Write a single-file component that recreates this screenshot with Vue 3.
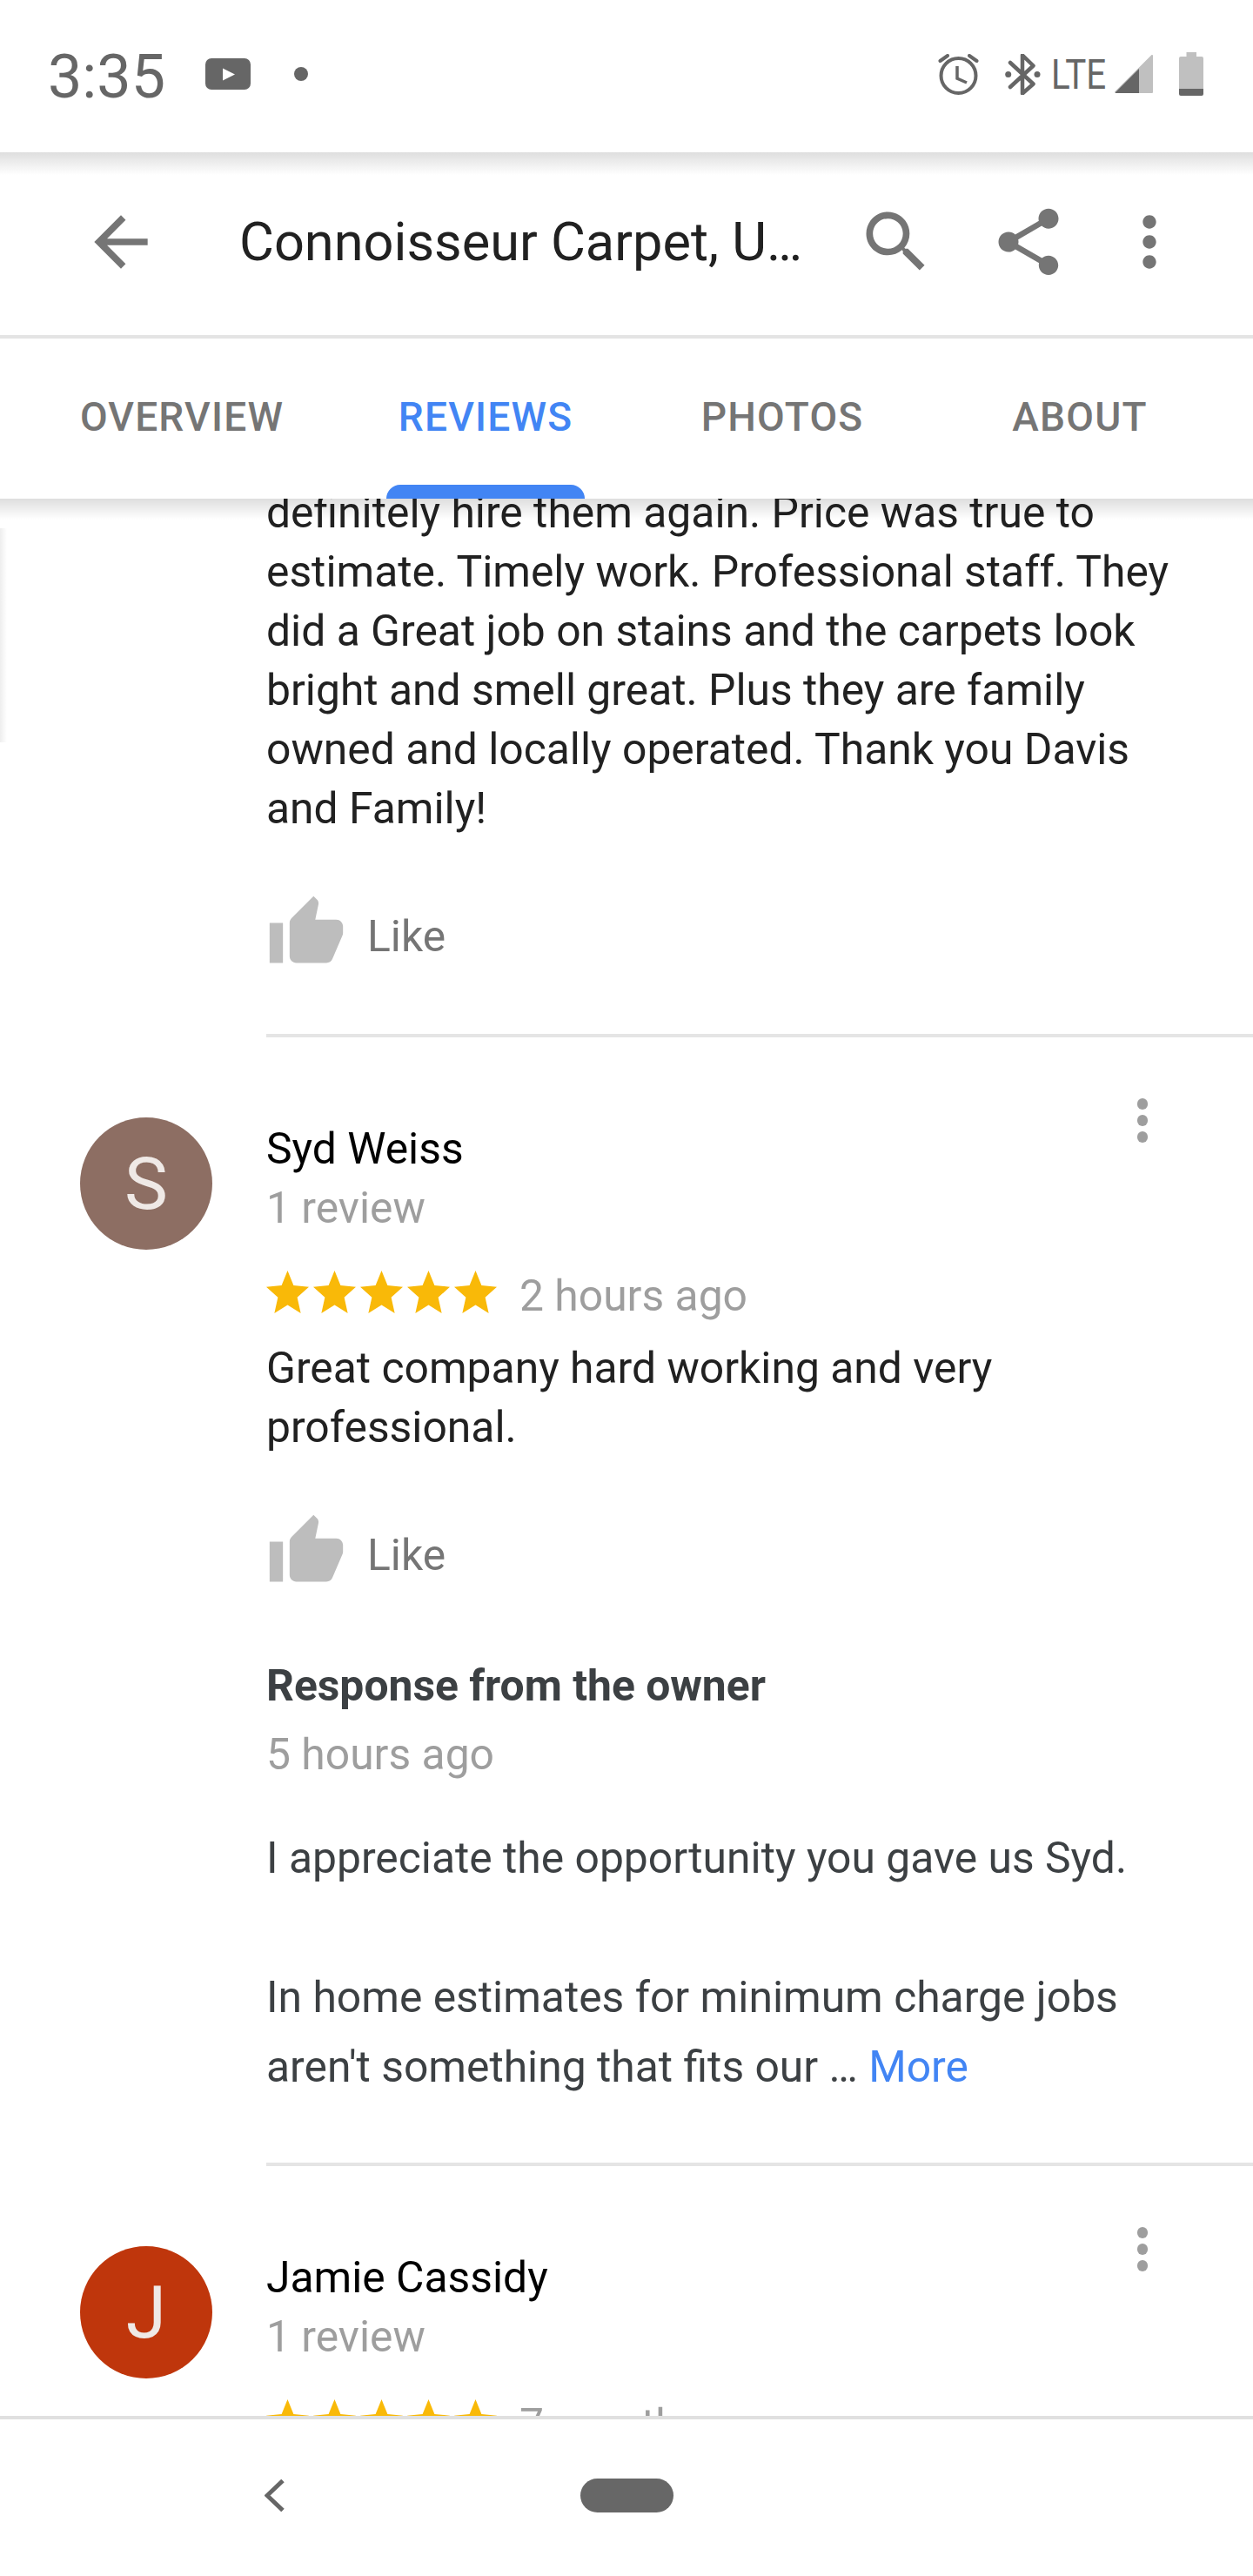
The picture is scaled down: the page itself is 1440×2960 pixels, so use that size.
<script setup>
import { ref } from 'vue';

const tabs = ['OVERVIEW', 'REVIEWS', 'PHOTOS', 'ABOUT'];
const activeTab = ref('REVIEWS');

const icons = {
  back: 'M20 11H7.83l5.59-5.59L12 4l-8 8 8 8 1.41-1.41L7.83 13H20v-2z',
  search: 'M15.5 14h-.79l-.28-.27C15.41 12.59 16 11.11 16 9.5 16 5.91 13.09 3 9.5 3S3 5.91 3 9.5 5.91 16 9.5 16c1.61 0 3.09-.59 4.23-1.57l.27.28v.79l5 4.99L20.49 19l-4.99-5zm-6 0C7.01 14 5 11.99 5 9.5S7.01 5 9.5 5 14 7.01 14 9.5 11.99 14 9.5 14z',
  share: 'M18 16.08c-.76 0-1.44.3-1.96.77L8.91 12.7c.05-.23.09-.46.09-.7s-.04-.47-.09-.7l7.05-4.11c.54.5 1.25.81 2.04.81 1.66 0 3-1.34 3-3s-1.34-3-3-3-3 1.34-3 3c0 .24.04.47.09.7L8.04 9.81C7.5 9.31 6.79 9 6 9c-1.66 0-3 1.34-3 3s1.34 3 3 3c.79 0 1.5-.31 2.04-.81l7.12 4.16c-.05.21-.08.43-.08.65 0 1.61 1.31 2.92 2.92 2.92 1.61 0 2.92-1.31 2.92-2.92s-1.31-2.92-2.92-2.92z',
  more: 'M12 8c1.1 0 2-.9 2-2s-.9-2-2-2-2 .9-2 2 .9 2 2 2zm0 2c-1.1 0-2 .9-2 2s.9 2 2 2 2-.9 2-2-.9-2-2-2zm0 6c-1.1 0-2 .9-2 2s.9 2 2 2 2-.9 2-2-.9-2-2-2z',
  thumb: 'M1 21h4V9H1v12zm22-11c0-1.1-.9-2-2-2h-6.31l.95-4.57.03-.32c0-.41-.17-.79-.44-1.06L14.17 1 7.59 7.59C7.22 7.95 7 8.45 7 9v10c0 1.1.9 2 2 2h9c.83 0 1.54-.5 1.84-1.22l3.02-7.05c.09-.23.14-.47.14-.73v-2z',
  star: 'M12 17.27L18.18 21l-1.64-7.03L22 9.24l-7.19-.61L12 2 9.19 8.63 2 9.24l5.46 4.73L5.82 21z'
};

const reviews = [
  {
    name: 'Syd Weiss',
    meta: '1 review',
    initial: 'S',
    color: '#8d6e63',
    time: '2 hours ago',
    text: 'Great company hard working and very professional.',
    response: {
      time: '5 hours ago',
      lines: ['I appreciate the opportunity you gave us Syd.', '', 'In home estimates for minimum charge jobs', "aren't something that fits our … "]
    }
  },
  {
    name: 'Jamie Cassidy',
    meta: '1 review',
    initial: 'J',
    color: '#bf360c',
    time: '7 months ago',
    text: ''
  }
];
</script>

<template>
  <div class="phone">
    <div class="status-bar">
      <span class="clock">3:35</span>
      <svg class="yt" width="52" height="36" viewBox="0 0 52 36">
        <rect width="52" height="36" rx="7" fill="#666" />
        <path d="M20 11.5 L34 18.5 L20 25.5z" fill="#fff" />
      </svg>
      <span class="notif-dot"></span>
      <div class="status-right">
        <svg class="alarm" width="47" height="47" viewBox="0 0 47 47" fill="none" stroke="#666">
          <circle cx="23.5" cy="25" r="20" stroke-width="4" />
          <path d="M2.5 8 L11 2 M36 2 L44.5 8" stroke-width="4" stroke-linecap="round" />
          <path d="M22 14 V28 L33 33" stroke-width="3.5" />
        </svg>
        <svg class="bt" width="41" height="47" viewBox="0 0 41 47" fill="none" stroke="#666">
          <path d="M6 10 L32.5 34.5 L20 45.5 V1.5 L32.5 13.5 L6 38" stroke-width="4.5" stroke-linejoin="round" stroke-linecap="round" />
          <circle cx="3.7" cy="23.5" r="3.5" fill="#666" stroke="none" />
          <circle cx="37" cy="23.5" r="3.5" fill="#666" stroke="none" />
        </svg>
        <span class="lte">LTE</span>
        <svg class="signal" width="44" height="44" viewBox="0 0 44 44">
          <path d="M1 43 L43 1 V43z" fill="#c0c0c0" stroke="#c0c0c0" stroke-width="2" stroke-linejoin="round" />
          <path d="M1 43 L28 16 V44 H1z" fill="#666" stroke="#666" stroke-width="0" />
        </svg>
        <svg class="battery" width="28" height="50" viewBox="0 0 28 50">
          <path d="M8.5 0 H20 V5 H26 a2 2 0 0 1 2 2 V42 H0 V7 a2 2 0 0 1 2 -2 H8.5z" fill="#c0c0c0" />
          <path d="M0 42 H28 V48 a2 2 0 0 1 -2 2 H2 a2 2 0 0 1 -2 -2z" fill="#666" />
        </svg>
      </div>
    </div>

    <div class="toolbar">
      <svg class="tool-icon back" viewBox="0 0 24 24"><path :d="icons.back" /></svg>
      <div class="title">Connoisseur Carpet, U…</div>
      <svg class="tool-icon search" viewBox="0 0 24 24"><path :d="icons.search" /></svg>
      <svg class="tool-icon share" viewBox="0 0 24 24"><path :d="icons.share" /></svg>
      <svg class="tool-icon more" viewBox="0 0 24 24"><path :d="icons.more" /></svg>
    </div>

    <div class="tabs">
      <div v-for="tab in tabs" :key="tab" class="tab" :class="{ active: tab === activeTab }">{{ tab }}</div>
    </div>

    <div class="content">
      <div class="drawer-edge"></div>
      <div class="partial">
        <p class="body-text">definitely hire them again. Price was true to estimate. Timely work. Professional staff. They did a Great job on stains and the carpets look bright and smell great. Plus they are family owned and locally operated. Thank you Davis and Family!</p>
        <div class="like">
          <svg class="thumb" viewBox="0 0 24 24"><path :d="icons.thumb" /></svg>
          <span>Like</span>
        </div>
      </div>

      <div v-for="r in reviews" :key="r.name" class="review">
        <div class="avatar" :style="{ background: r.color }">{{ r.initial }}</div>
        <div class="review-main">
          <div class="review-head">
            <div>
              <div class="name">{{ r.name }}</div>
              <div class="meta">{{ r.meta }}</div>
            </div>
            <div class="dots"><i></i><i></i><i></i></div>
          </div>
          <div class="rating">
            <svg v-for="n in 5" :key="n" class="star" viewBox="2 2 20 19" preserveAspectRatio="none"><path :d="icons.star" /></svg>
            <span class="time">{{ r.time }}</span>
          </div>
          <template v-if="r.text">
            <p class="body-text">{{ r.text }}</p>
            <div class="like">
              <svg class="thumb" viewBox="0 0 24 24"><path :d="icons.thumb" /></svg>
              <span>Like</span>
            </div>
          </template>
          <div v-if="r.response" class="response">
            <div class="response-title">Response from the owner</div>
            <div class="response-time">{{ r.response.time }}</div>
            <div class="response-text">
              <div v-for="(line, i) in r.response.lines" :key="i" class="response-line">{{ line }}<a v-if="i === r.response.lines.length - 1" class="more-link">More</a></div>
            </div>
          </div>
        </div>
      </div>
    </div>

    <div class="nav-bar">
      <svg class="nav-back" width="23" height="37" viewBox="0 0 23 37" fill="none">
        <path d="M21 1.5 L3 18.5 L21 35.5" stroke="#666" stroke-width="5" />
      </svg>
      <div class="home-pill"></div>
    </div>
  </div>
</template>

<style scoped>
.phone {
  width: 1440px;
  height: 2960px;
  display: flex;
  flex-direction: column;
  overflow: hidden;
  background: #fff;
  font-family: Roboto, "Liberation Sans", sans-serif;
  position: relative;
}

.status-bar {
  height: 175px;
  flex: none;
  display: flex;
  align-items: center;
  padding-left: 55px;
  box-sizing: border-box;
  position: relative;
  z-index: 3;
  color: #666;
}

.status-bar::after {
  content: '';
  position: absolute;
  left: 0;
  right: 0;
  top: 100%;
  height: 26px;
  background: linear-gradient(#dedede, rgba(255, 255, 255, 0));
}

.clock {
  font-size: 70px;
  line-height: 1;
}

.yt {
  margin-left: 46px;
  margin-top: -5px;
}

.notif-dot {
  width: 16px;
  height: 16px;
  border-radius: 50%;
  background: #666;
  margin-left: 50px;
  margin-top: -5px;
}

.status-right {
  margin-left: auto;
  margin-right: 57px;
  display: flex;
  align-items: center;
  margin-top: -5px;
}

.bt {
  margin-left: 30px;
}

.lte {
  font-size: 48px;
  line-height: 47px;
  width: 61px;
  margin-left: 12px;
  transform: scaleX(0.84);
  transform-origin: left center;
  white-space: nowrap;
}

.signal {
  margin-left: 12px;
}

.battery {
  margin-left: 30px;
}

.toolbar {
  height: 214px;
  flex: none;
  display: flex;
  align-items: center;
  padding-left: 93px;
  padding-bottom: 4px;
  box-sizing: border-box;
  border-bottom: 4px solid #e4e4e4;
}

.tool-icon {
  width: 92px;
  height: 92px;
  fill: #757575;
  flex: none;
}

.title {
  flex: 1;
  margin-left: 90px;
  font-size: 61.3px;
  color: #212121;
  white-space: nowrap;
}

.share {
  margin-left: 60px;
}

.more {
  margin-left: 47px;
  margin-right: 73px;
}

.tabs {
  height: 184px;
  flex: none;
  display: grid;
  grid-template-columns: 352px 346px 336px 348px;
  padding-left: 33px;
  position: relative;
  z-index: 2;
  background: #fff;
}

.tabs::after {
  content: '';
  position: absolute;
  left: 0;
  right: 0;
  top: 100%;
  height: 24px;
  background: linear-gradient(rgba(0, 0, 0, 0.13), rgba(255, 255, 255, 0));
}

.tab {
  position: relative;
  display: flex;
  align-items: center;
  justify-content: center;
  padding-bottom: 4px;
  box-sizing: border-box;
  font-size: 46px;
  font-weight: 500;
  letter-spacing: 1.2px;
  color: #757575;
}

.tab.active {
  color: #4285f4;
}

.tab.active::after {
  content: '';
  position: absolute;
  left: 50%;
  bottom: 0;
  width: 228px;
  height: 16px;
  transform: translateX(-50%);
  background: #4285f4;
  border-radius: 16px 16px 0 0;
}

.content {
  flex: 1;
  min-height: 0;
  overflow: hidden;
  position: relative;
}

.drawer-edge {
  position: absolute;
  left: 0;
  top: 34px;
  width: 8px;
  height: 246px;
  background: linear-gradient(90deg, #eee, #fff);
}

.partial {
  margin-top: -18px;
  margin-left: 306px;
  padding-bottom: 70px;
  border-bottom: 4px solid #e5e5e5;
}

.body-text {
  margin: 0;
  max-width: 1060px;
  font-size: 49.8px;
  line-height: 68px;
  color: #212121;
}

.like {
  display: flex;
  align-items: center;
  height: 92px;
  margin-top: 63px;
  font-size: 49.8px;
  color: #757575;
}

.like span {
  margin-left: 24px;
  padding-top: 8px;
}

.thumb {
  width: 92px;
  height: 92px;
  fill: #bdbdbd;
  flex: none;
}

.review {
  display: flex;
  align-items: flex-start;
  padding-left: 92px;
  padding-top: 92px;
}

.avatar {
  width: 152px;
  height: 152px;
  flex: none;
  border-radius: 50%;
  display: flex;
  align-items: center;
  justify-content: center;
  font-size: 84px;
  color: #efe9e6;
  margin-right: 62px;
}

.review-main {
  flex: 1;
  border-bottom: 4px solid #e5e5e5;
  padding-bottom: 70px;
}

.review-head {
  display: flex;
  justify-content: space-between;
  align-items: flex-start;
  padding-top: 2px;
}

.name {
  font-size: 49.8px;
  line-height: 68px;
  color: #000;
}

.meta {
  font-size: 49.8px;
  line-height: 68px;
  color: #9e9e9e;
}

.dots {
  display: flex;
  flex-direction: column;
  gap: 6.5px;
  margin-top: -24px;
  margin-right: 121px;
}

.dots i {
  display: block;
  width: 12.5px;
  height: 12.5px;
  border-radius: 50%;
  background: #9e9e9e;
}

.rating {
  display: flex;
  align-items: center;
  gap: 5px;
  height: 68px;
  margin-top: 31px;
  margin-bottom: 17px;
}

.star {
  width: 49px;
  height: 49px;
  fill: #f9b908;
  flex: none;
  margin-top: -6px;
}

.time {
  margin-left: 21px;
  padding-top: 4px;
  font-size: 49.8px;
  color: #9e9e9e;
}

.response {
  margin-top: 74px;
}

.response-title {
  font-size: 49.8px;
  line-height: 68px;
  font-weight: 700;
  color: #3c4043;
}

.response-time {
  margin-top: 11px;
  font-size: 49.8px;
  line-height: 68px;
  color: #9e9e9e;
}

.response-text {
  margin-top: 45px;
  font-size: 49.8px;
  line-height: 80px;
  color: #3c4043;
}

.response-line {
  min-height: 80px;
  white-space: pre;
}

.more-link {
  color: #4285f4;
}

.nav-bar {
  height: 184px;
  flex: none;
  border-top: 4px solid #e0e0e0;
  box-sizing: border-box;
  position: relative;
  display: flex;
  align-items: center;
  background: #fff;
}

.nav-back {
  margin-left: 304px;
  margin-top: -6px;
}

.home-pill {
  width: 107px;
  height: 39px;
  margin-left: 340px;
  margin-top: -6px;
  border-radius: 20px;
  background: #676767;
}
</style>
